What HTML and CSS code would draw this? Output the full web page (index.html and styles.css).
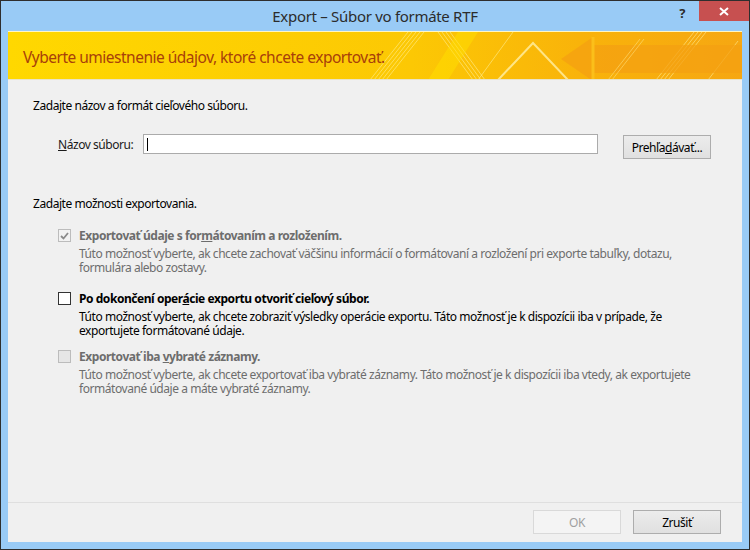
FILE: index.html
```html
<!DOCTYPE html>
<html lang="sk">
<head>
    <meta charset="UTF-8">
    <title>Export – Súbor vo formáte RTF</title>
    <link rel="stylesheet" href="styles.css">
</head>
<body>
    <div class="window">
        <div class="titlebar">
            <span class="title">Export – Súbor vo formáte RTF</span>
            <span class="help">?</span>
            <span class="close">
                <svg width="10" height="9" viewBox="0 0 10 9"><path d="M1 1 L9 8 M9 1 L1 8" stroke="#fff" stroke-width="2"/></svg>
            </span>
        </div>
        <div class="client">
            <div class="banner">
                <svg class="banner-art" width="734" height="49" viewBox="0 0 734 49">
                    <defs>
                        <linearGradient id="bg" x1="0" x2="1" y1="0" y2="0">
                            <stop offset="0" stop-color="#ffd800"/>
                            <stop offset="0.55" stop-color="#fcc804"/>
                            <stop offset="0.78" stop-color="#f9b30a"/>
                            <stop offset="1" stop-color="#f6a712"/>
                        </linearGradient>
                    </defs>
                    <rect width="734" height="49" fill="url(#bg)"/>
                    <rect width="734" height="1" fill="#fff6c0"/>
                    <g stroke="#fff3a0" stroke-opacity="0.55" stroke-width="1">
                        <path d="M362 49 L400 1 M366 49 L404 1 M370 49 L408 1 M374 49 L412 1 M378 49 L416 1"/>
                        <path d="M470 49 L505 1"/>
                        <path d="M430 1 L465 49 M434 1 L469 49 M438 1 L473 49 M442 1 L477 49"/>
                        <path d="M648 49 L686 1 M652 49 L690 1 M656 49 L694 1 M660 49 L698 1"/>
                        <path d="M700 49 L730 10"/>
                    </g>
                    <path d="M420 49 L450 1 L470 1 L440 49 Z" fill="#ffe000" opacity="0.5"/>
                    <path d="M490 49 L525 12 L560 49" fill="none" stroke="#fff0a8" stroke-width="2" stroke-opacity="0.8"/>
                    <path d="M553 28 L585 6 L585 14 L734 14 L734 42 L585 42 L585 50 Z" fill="#f4a012" opacity="0.75"/>
                    <path d="M585 6 L585 50" stroke="#fbbf1a" stroke-width="3"/>
                    <path d="M600 49 L632 8 M604 49 L636 8" stroke="#fde07a" stroke-opacity="0.6"/>
                    <rect y="48" width="734" height="1" fill="#e9e3c8"/>
                </svg>
                <span class="banner-text">Vyberte umiestnenie údajov, ktoré chcete exportovať.</span>
            </div>

            <div class="content">
                <p class="section">Zadajte názov a formát cieľového súboru.</p>
                <div class="file-row">
                    <label class="file-label"><u>N</u>ázov súboru:</label>
                    <div class="file-input"><span class="caret"></span></div>
                    <button class="btn browse">Prehľa<u>d</u>ávať...</button>
                </div>

                <p class="section options-title">Zadajte možnosti exportovania.</p>

                <div class="option disabled">
                    <div class="option-head">
                        <span class="check checked">
                            <svg width="9" height="8" viewBox="0 0 9 8"><path d="M1 4 L3.5 6.5 L8 1" fill="none" stroke="#8a8a8a" stroke-width="1.8"/></svg>
                        </span>
                        <span class="option-label">Exportovať údaje s for<u>m</u>átovaním a rozložením.</span>
                    </div>
                    <p class="option-desc">Túto možnosť vyberte, ak chcete zachovať väčšinu informácií o formátovaní a rozložení pri exporte tabuľky, dotazu, formulára alebo zostavy.</p>
                </div>

                <div class="option">
                    <div class="option-head">
                        <span class="check"></span>
                        <span class="option-label">Po dokončení oper<u>á</u>cie exportu otvoriť cieľový súbor.</span>
                    </div>
                    <p class="option-desc">Túto možnosť vyberte, ak chcete zobraziť výsledky operácie exportu. Táto možnosť je k dispozícii iba v prípade, že exportujete formátované údaje.</p>
                </div>

                <div class="option disabled last">
                    <div class="option-head">
                        <span class="check"></span>
                        <span class="option-label">Exportovať iba <u>v</u>ybraté záznamy.</span>
                    </div>
                    <p class="option-desc">Túto možnosť vyberte, ak chcete exportovať iba vybraté záznamy. Táto možnosť je k dispozícii iba vtedy, ak exportujete formátované údaje a máte vybraté záznamy.</p>
                </div>
            </div>

            <div class="footer">
                <button class="btn ok" disabled>OK</button>
                <button class="btn">Zrušiť</button>
            </div>
        </div>
    </div>
</body>
</html>
```
FILE: styles.css
```css
body {
    margin: 0;
    background: #99cbf6;
    font-family: "Noto Sans", "Open Sans", sans-serif;
    font-size: 12px;
    letter-spacing: -0.45px;
    color: #000;
}
.window {
    width: 750px;
    height: 550px;
    box-sizing: border-box;
    border: 1px solid #2e2e2e;
    background: #99cbf6;
    padding: 0 7px 7px 7px;
    display: flex;
    flex-direction: column;
}
.titlebar {
    height: 30px;
    display: flex;
    align-items: center;
    justify-content: center;
    position: relative;
}
.title {
    font-size: 15px;
    letter-spacing: -0.3px;
    color: #2c2c2c;
    margin-top: -1px;
}
.help {
    position: absolute;
    right: 57px;
    top: 3px;
    font-weight: bold;
    font-size: 13px;
    color: #2c2c2c;
}
.close {
    position: absolute;
    right: -7px;
    top: 0;
    width: 50px;
    height: 20px;
    background: #c75050;
    display: flex;
    align-items: center;
    justify-content: center;
}
.client {
    flex: 1;
    background: #f0f0f0;
    display: flex;
    flex-direction: column;
}
.banner {
    height: 49px;
    position: relative;
    display: flex;
    align-items: center;
}
.banner-art {
    position: absolute;
    top: 0;
    left: 0;
}
.banner-text {
    position: relative;
    margin-left: 15px;
    margin-top: 2px;
    font-size: 15.5px;
    letter-spacing: -0.5px;
    color: #a8400a;
}
.content {
    padding: 0 0 0 25px;
}
.section {
    margin: 18px 0 0 0;
    line-height: 15px;
}
.file-row {
    display: flex;
    align-items: flex-start;
    margin-top: 21px;
    padding-left: 25px;
}
.file-label {
    width: 85px;
    margin-top: 2px;
    color: #1a1a1a;
}
.file-input {
    width: 453px;
    height: 18px;
    background: #fff;
    border: 1px solid #ababab;
    display: flex;
    align-items: center;
}
.caret {
    display: block;
    width: 1px;
    height: 13px;
    margin-left: 3px;
    background: #000;
}
.btn {
    font-family: inherit;
    font-size: 12px;
    letter-spacing: -0.45px;
    width: 88px;
    height: 24px;
    background: linear-gradient(#ececec, #e0e0e0);
    border: 1px solid #adadad;
    color: #000;
    padding: 0;
}
.browse {
    margin-left: 25px;
    margin-top: 1px;
}
.options-title {
    margin-top: 37px;
}
.option {
    padding-left: 25px;
    margin-top: 17px;
}
.option + .option {
    margin-top: 16px;
}
.option.last {
    margin-top: 11px;
}
.option-head {
    display: flex;
    align-items: center;
    height: 15px;
}
.check {
    width: 11px;
    height: 11px;
    border: 1px solid #333;
    background: #fff;
    margin-right: 8px;
    display: flex;
    align-items: center;
    justify-content: center;
}
.option-label {
    font-weight: bold;
}
.option-desc {
    width: 612px;
    margin: 4px 0 0 21px;
    line-height: 14px;
}
.disabled {
    color: #6d6d6d;
}
.disabled .check {
    border-color: #bcbcbc;
    background: #e6e6e6;
}
.disabled .check.checked {
    background: #f2f2f2;
}
.footer {
    margin-top: auto;
    border-top: 1px solid #dfdfdf;
    padding: 7px 21px 8px 0;
    display: flex;
    justify-content: flex-end;
    gap: 12px;
}
.ok {
    background: #f4f4f4;
    border-color: #d9d9d9;
    color: #a0a0a0;
}
```
